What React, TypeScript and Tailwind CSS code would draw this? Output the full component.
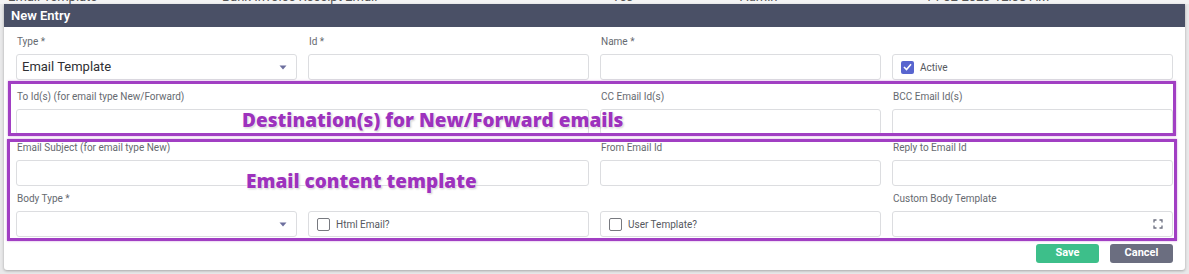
import React from 'react';

const font = { fontFamily: 'Roboto, "Liberation Sans", sans-serif' };

const Label = ({ children }: { children: React.ReactNode }) => (
  <div className="h-[16px] mb-[4px] text-[10px] leading-[16px] text-[#666a70] pl-[1px]">{children}</div>
);

const Input = () => <div className="h-[26px] rounded-[3px] border border-[#dcdde0] bg-white" />;

const Caret = () => (
  <svg width="8" height="5" viewBox="0 0 8 5" className="mr-[9px]">
    <path d="M0.5 0.5 L4 4.5 L7.5 0.5 Z" fill="#6d6f9e" />
  </svg>
);

const Select = ({ value }: { value?: string }) => (
  <div className="h-[26px] rounded-[3px] border border-[#dcdde0] bg-white flex items-center justify-between pl-[5px]">
    <span className="text-[13px] text-[#2f3033]">{value}</span>
    <Caret />
  </div>
);

const Check = ({ label, checked }: { label: string; checked?: boolean }) => (
  <div className="h-[26px] rounded-[3px] border border-[#dcdde0] bg-white flex items-center pl-[8px] gap-[6px]">
    {checked ? (
      <span className="w-[13px] h-[13px] rounded-[2px] bg-[#5865cf] flex items-center justify-center">
        <svg width="9" height="8" viewBox="0 0 9 8">
          <path d="M1 4 L3.5 6.5 L8 1.2" stroke="#fff" strokeWidth="1.6" fill="none" />
        </svg>
      </span>
    ) : (
      <span className="w-[13px] h-[13px] rounded-[2px] border border-[#77797f] bg-white" />
    )}
    <span className="text-[10px] text-[#55585e]">{label}</span>
  </div>
);

const Field = ({ label, children }: { label?: string; children: React.ReactNode }) => (
  <div>
    <Label>{label}</Label>
    {children}
  </div>
);

const annot = {
  fontFamily: '"Open Sans", Lato, sans-serif',
  textShadow: '0 0 2px #fff, 0 0 2px #fff, 1px 1px 2px rgba(0,0,0,0.25)',
};

export default function App() {
  return (
    <div className="w-[1189px] h-[274px] bg-[#e9e9ea] relative overflow-hidden" style={font}>
      <div className="h-[4px] overflow-hidden bg-[#f4f4f5]">
        <div className="flex text-[13px] text-[#555] mt-[-11px] leading-[16px]">
          <span className="ml-[8px] w-[214px]">Email Template</span>
          <span className="w-[390px]">Bank Invoice Receipt Email</span>
          <span className="w-[128px]">Yes</span>
          <span className="w-[185px]">Admin</span>
          <span>14-02-2023 12:08 AM</span>
        </div>
      </div>
      <div className="mx-[4px] bg-white rounded-b-[3px] shadow-[0_1px_3px_rgba(0,0,0,0.3)]">
        <div className="h-[23px] bg-[#4a5066] text-white text-[13px] font-semibold leading-[23px] pl-[7px]">
          New Entry
        </div>
        <div className="px-[12px] pt-[7px] pb-[7px]">
          <div className="grid grid-cols-4 gap-x-[11px]">
            <Field label="Type *"><Select value="Email Template" /></Field>
            <Field label="Id *"><Input /></Field>
            <Field label="Name *"><Input /></Field>
            <Field label=""><Check label="Active" checked /></Field>
          </div>
          <div className="grid grid-cols-4 gap-x-[11px] mt-[9px]">
            <div className="col-span-2"><Field label="To Id(s) (for email type New/Forward)"><Input /></Field></div>
            <Field label="CC Email Id(s)"><Input /></Field>
            <Field label="BCC Email Id(s)"><Input /></Field>
          </div>
          <div className="grid grid-cols-4 gap-x-[11px] mt-[5px]">
            <div className="col-span-2"><Field label="Email Subject (for email type New)"><Input /></Field></div>
            <Field label="From Email Id"><Input /></Field>
            <Field label="Reply to Email Id"><Input /></Field>
          </div>
          <div className="grid grid-cols-4 gap-x-[11px] mt-[5px]">
            <Field label="Body Type *"><Select /></Field>
            <Field label=""><Check label="Html Email?" /></Field>
            <Field label=""><Check label="User Template?" /></Field>
            <Field label="Custom Body Template">
              <div className="h-[26px] rounded-[3px] border border-[#dcdde0] bg-white flex items-center justify-end pr-[9px]">
                <svg width="10" height="10" viewBox="0 0 10 10" fill="none" stroke="#6d7080" strokeWidth="1.3">
                  <path d="M1 3.5V1h2.5M6.5 1H9v2.5M9 6.5V9H6.5M3.5 9H1V6.5" />
                </svg>
              </div>
            </Field>
          </div>
          <div className="flex justify-end gap-[11px] mt-[7px]">
            <button className="w-[63px] h-[19px] rounded-[3px] bg-[#3dbf8a] text-white text-[11px] font-bold">Save</button>
            <button className="w-[63px] h-[19px] rounded-[3px] bg-[#6b6e80] text-white text-[11px] font-bold">Cancel</button>
          </div>
        </div>
      </div>

      {/* annotation overlays */}
      <div className="absolute left-[8px] top-[81px] w-[1168px] h-[55px] border-[3px] border-[#a13fc3] shadow-[0_0_2px_rgba(161,63,195,0.5)]" />
      <div className="absolute left-[7px] top-[139px] w-[1170px] h-[102px] border-[3px] border-[#a13fc3] shadow-[0_0_2px_rgba(161,63,195,0.5)]" />
      <div className="absolute left-[242px] top-[107px] text-[19px] font-extrabold text-[#9d32bd] leading-[26px]" style={annot}>
        Destination(s) for New/Forward emails
      </div>
      <div className="absolute left-[246px] top-[168px] text-[19px] font-extrabold text-[#9d32bd] leading-[26px]" style={annot}>
        Email content template
      </div>
    </div>
  );
}
